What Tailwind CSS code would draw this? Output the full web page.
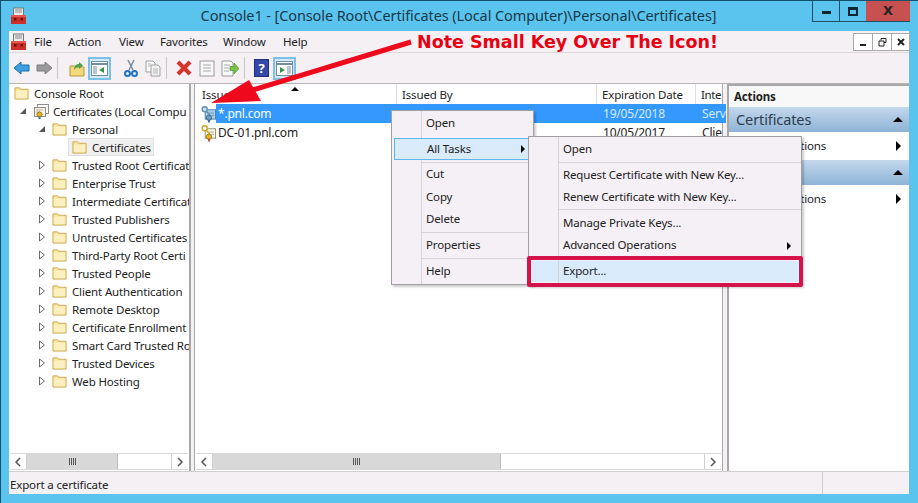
<!DOCTYPE html>
<html lang="en">
<head>
  <meta charset="UTF-8">
  <title>Console1</title>
  <script src="https://cdn.jsdelivr.net/npm/@tailwindcss/browser@4"></script>
</head>
<body class="bg-[#5bc4ee] overflow-hidden">
  <svg class="hidden">
    <symbol id="folder" viewBox="0 0 16 14">
      <path d="M1 1.500h5l1 1.500h8v10.500H1z" fill="#fbe6a2" stroke="#c9a64e"/>
      <path d="M2 4.500h12v8H2z" fill="#fdf0c0"/>
    </symbol>
    <symbol id="open" viewBox="0 0 8 10">
      <path d="M1.500 1l5 4-5 4z" fill="#fff" stroke="#6b6b6b"/>
    </symbol>
    <symbol id="expanded" viewBox="0 0 8 8">
      <path d="M7 1v6H1z" fill="#555"/>
    </symbol>
    <symbol id="chev-l" viewBox="0 0 8 10"><path d="M6 1L2 5l4 4" fill="none" stroke="#555" stroke-width="1.500"/></symbol>
    <symbol id="chev-r" viewBox="0 0 8 10"><path d="M2 1l4 4-4 4" fill="none" stroke="#555" stroke-width="1.500"/></symbol>
    <symbol id="snapin" viewBox="0 0 16 16">
      <rect x="4.500" y="1.500" width="11" height="9" fill="#fff" stroke="#8d8d8d"/>
      <rect x="1.500" y="4.500" width="11" height="9" fill="#f7f2dc" stroke="#8d8d8d"/>
      <path d="M3 7h7M3 9h4" stroke="#b5b5b5"/>
      <circle cx="6.500" cy="11.500" r="2.500" fill="#e9b526" stroke="#9a7414"/>
      <path d="M6.500 13.500v2.500" stroke="#3b6fb0" stroke-width="2"/>
    </symbol>
    <symbol id="cert-key" viewBox="0 0 16 18">
      <rect x="4.500" y="4.500" width="11" height="10" fill="#fffbe8" stroke="#8f8a70"/>
      <path d="M8 8h6M11 10.500h3" stroke="#a9a68f"/>
      <circle cx="4" cy="4" r="2.700" fill="#fff" stroke="#d1a21f" stroke-width="1.500"/>
      <path d="M5.500 6l4 4" stroke="#d1a21f" stroke-width="1.500"/>
      <circle cx="8.500" cy="13" r="2.800" fill="#e9b526" stroke="#9a7414"/>
      <path d="M8.500 15v3" stroke="#b5472c" stroke-width="2"/>
    </symbol>
    <symbol id="cert-key-sel" viewBox="0 0 16 18">
      <rect x="4.500" y="4.500" width="11" height="10" fill="#a9cfe8" stroke="#4d7fa3"/>
      <path d="M8 8h6M11 10.500h3" stroke="#6c9cbd"/>
      <circle cx="4" cy="4" r="2.700" fill="#cfe4f2" stroke="#5e93b5" stroke-width="1.500"/>
      <path d="M5.500 6l4 4" stroke="#5e93b5" stroke-width="1.500"/>
      <circle cx="8.500" cy="13" r="2.800" fill="#6d9fc4" stroke="#3b6a8f"/>
      <path d="M8.500 15v3" stroke="#3b6a8f" stroke-width="2"/>
    </symbol>
    <symbol id="toolbox" viewBox="0 0 17 18">
      <rect x="3.500" y="1" width="10" height="8" fill="#ededed" stroke="#777"/>
      <path d="M5 3h7M5 5h7" stroke="#8a8a8a"/>
      <path d="M1 8h15v9H1z" fill="#cc3029"/>
      <path d="M1 8h15v2H1z" fill="#e2574f"/>
      <rect x="4" y="11" width="2.500" height="2.500" fill="#6d0f0b"/>
      <rect x="10.500" y="11" width="2.500" height="2.500" fill="#6d0f0b"/>
    </symbol>
  </svg>

  <div class="relative w-[918px] h-[503px] flex flex-col border-t border-l border-[#12506c] font-['Noto_Sans',sans-serif] text-[11.500px] tracking-[-0.15px] text-[#222]">
    <!-- title bar -->
    <div class="relative h-[30px] shrink-0 flex items-center justify-center text-[14.500px] tracking-[-0.1px] text-[#17394a] pr-[2px]">
      <svg class="absolute left-[9px] top-[6px] w-[17px] h-[18px]"><use href="#toolbox"/></svg>
      <span>Console1 - [Console Root\Certificates (Local Computer)\Personal\Certificates]</span>
      <div class="absolute left-[811px] top-0 flex h-[21px] border-b border-l border-[#1b4f66]">
        <div class="w-[27px] flex items-center justify-center border-r border-[#1b4f66]"><div class="w-[9px] h-[3px] bg-[#10252e] mt-[3px]"></div></div>
        <div class="w-[26px] flex items-center justify-center"><div class="w-[10px] h-[9px] border-2 border-t-[3px] border-[#10252e]"></div></div>
        <div class="w-[44px] flex items-center justify-center bg-[#c75050] font-bold text-[13px] text-[#222] font-['DejaVu_Sans',sans-serif]">X</div>
      </div>
    </div>

    <!-- client area -->
    <div class="mx-[8px] w-[900px] h-[463px] bg-[#f4f0f4] flex flex-col">
      <!-- menu bar -->
      <div class="relative h-[22px] shrink-0 flex items-center border-b border-[#dcd8dc]">
        <svg class="absolute left-[1px] top-[2px] w-[17px] h-[18px]"><use href="#toolbox"/></svg>
        <div class="flex pl-[25px] pt-[1px] whitespace-nowrap">
          <span class="w-[34px]">File</span>
          <span class="w-[51px]">Action</span>
          <span class="w-[41px]">View</span>
          <span class="w-[63px]">Favorites</span>
          <span class="w-[60px]">Window</span>
          <span>Help</span>
        </div>
        <div class="absolute left-[844px] top-[2px] flex h-[18px] bg-white border border-[#a9a9a9] text-[#222]">
          <div class="w-[19px] flex items-end justify-center pb-[4px] border-r border-[#a9a9a9]"><div class="w-[6px] h-[2px] bg-[#222]"></div></div>
          <div class="w-[19px] flex items-center justify-center border-r border-[#a9a9a9]">
            <svg class="w-[9px] h-[9px]" viewBox="0 0 9 9"><path d="M3 2.500V.5h5v4H6M1 3h5v5H1z" fill="none" stroke="#222"/></svg>
          </div>
          <div class="w-[17px] flex items-center justify-center">
            <svg class="w-[8px] h-[8px]" viewBox="0 0 8 8"><path d="M1 1l6 6M7 1L1 7" stroke="#222" stroke-width="2"/></svg>
          </div>
        </div>
      </div>

      <!-- toolbar -->
      <div class="h-[30px] shrink-0 flex items-center pl-[4px]">
        <svg class="w-[17px] h-[16px] mr-[6px]" viewBox="0 0 17 16"><path d="M1 8l7-6v3h8v6H8v3z" fill="#3f9fe0" stroke="#1d6fae" stroke-linejoin="round"/></svg>
        <svg class="w-[17px] h-[16px] mr-[4px]" viewBox="0 0 17 16"><path d="M16 8L9 2v3H1v6h8v3z" fill="#9a9a9a" stroke="#7a7a7a" stroke-linejoin="round"/></svg>
        <div class="w-px h-[22px] bg-[#c8c8c8] mr-[11px]"></div>
        <svg class="w-[16px] h-[17px] mr-[3px]" viewBox="0 0 16 17"><path d="M1 6h5l1 1h8v9H1z" fill="#f2d97a" stroke="#b8983c"/><path d="M5 10c0-4 2-6 5-6V2l4 3.500-4 3.500V7c-2 0-4 1-5 3z" fill="#4ea34a"/></svg>
        <div class="w-[23px] h-[23px] mr-[13px] bg-[#d3e9f8] border-2 border-[#7cc0e6] flex items-center justify-center">
          <svg class="w-[17px] h-[15px] shrink-0" viewBox="0 0 17 15"><rect x=".5" y=".5" width="16" height="14" fill="#fff" stroke="#6f8da3"/><path d="M1 3h15" stroke="#6f8da3" stroke-width="2"/><path d="M2 5h4v8H2z" fill="#b9c6cf"/><path d="M13 6v6L8 9z" fill="#3d8f4a"/></svg>
        </div>
        <svg class="w-[14px] h-[19px] mr-[7px]" viewBox="0 0 14 19"><path d="M4 1l5 10M10 1L5 11" stroke="#7c8c99" stroke-width="1.500"/><circle cx="3.500" cy="14.500" r="2.500" fill="none" stroke="#1f74c4" stroke-width="2"/><circle cx="10.500" cy="14.500" r="2.500" fill="none" stroke="#1f74c4" stroke-width="2"/></svg>
        <svg class="w-[16px] h-[17px] mr-[5px]" viewBox="0 0 16 17"><path d="M1 1h7l2 2v9H1z" fill="#fbfbfb" stroke="#a0a0a0"/><path d="M6 5h7l2 2v9H6z" fill="#f1f1f1" stroke="#a0a0a0"/><path d="M8 9h5M8 11h5M8 13h5M3 4h3M3 6h2" stroke="#b8b8b8"/></svg>
        <div class="w-px h-[22px] bg-[#c8c8c8] mr-[9px]"></div>
        <svg class="w-[16px] h-[16px] mr-[7px]" viewBox="0 0 16 16"><path d="M2 2l12 12M14 2L2 14" stroke="#d9322c" stroke-width="4"/></svg>
        <svg class="w-[16px] h-[17px] mr-[6px]" viewBox="0 0 16 17"><rect x="1" y="1" width="14" height="15" fill="#f8f8f8" stroke="#9a9a9a"/><path d="M4 5h8M4 8h8M4 11h8" stroke="#a9a9a9"/></svg>
        <svg class="w-[18px] h-[17px] mr-[5px]" viewBox="0 0 18 17"><path d="M1 1h9l2 2v13H1z" fill="#f8f8f8" stroke="#9a9a9a"/><path d="M3 5h6M3 8h5M3 11h5" stroke="#a9a9a9"/><path d="M9 6.500h4V3l5 5.500-5 5.500v-3.500H9z" fill="#7cc04a" stroke="#4f9a2f" stroke-width=".7"/></svg>
        <div class="w-px h-[22px] bg-[#c8c8c8] mr-[9px]"></div>
        <div class="w-[15px] h-[18px] mr-[4px] bg-[#3348a8] border border-[#22307a] text-white font-bold text-[13px] leading-[16px] text-center">?</div>
        <div class="w-[23px] h-[23px] bg-[#d3e9f8] border-2 border-[#7cc0e6] flex items-center justify-center">
          <svg class="w-[17px] h-[15px] shrink-0" viewBox="0 0 17 15"><rect x=".5" y=".5" width="16" height="14" fill="#fff" stroke="#6f8da3"/><path d="M1 3h15" stroke="#6f8da3" stroke-width="2"/><path d="M11 5h4v8h-4z" fill="#b9c6cf"/><path d="M4 6v6l5-3z" fill="#3d8f4a"/></svg>
        </div>
      </div>

      <!-- panes -->
      <div class="h-[388px] shrink-0 flex border-t border-[#b5b5b5]">
        <!-- tree -->
        <div class="w-[182px] shrink-0 bg-white border-r-2 border-[#a8a8a8] flex flex-col">
          <div id="tree" class="flex-1 overflow-hidden whitespace-nowrap">
            <div class="h-[18px] flex items-center pl-[5px]"><svg class="w-[15px] h-[14px] mr-[5px] shrink-0"><use href="#folder"/></svg><span class="pt-[1px]">Console Root</span></div>
            <div class="h-[18px] flex items-center pl-[10px]"><svg class="w-[8px] h-[8px] mr-[6px] shrink-0"><use href="#expanded"/></svg><svg class="w-[16px] h-[16px] mr-[4px] shrink-0"><use href="#snapin"/></svg><span class="pt-[1px]">Certificates (Local Compu</span></div>
            <div class="h-[18px] flex items-center pl-[29px]"><svg class="w-[8px] h-[8px] mr-[6px] shrink-0"><use href="#expanded"/></svg><svg class="w-[15px] h-[14px] mr-[5px] shrink-0"><use href="#folder"/></svg><span class="pt-[1px]">Personal</span></div>
            <div class="h-[18px] flex items-center ml-[59px] pl-[3px] w-[86px] bg-[#f0f0f0] border border-[#e2e2e2]"><svg class="w-[15px] h-[14px] mr-[5px] shrink-0"><use href="#folder"/></svg><span class="pt-[1px]">Certificates</span></div>
          </div>
          <div class="h-[17px] mb-[1px] mx-[1px] flex bg-white border-y border-[#d8d8d8]">
            <div class="w-[17px] flex items-center justify-center border-r border-[#cfcfcf]"><svg class="w-[8px] h-[10px]"><use href="#chev-l"/></svg></div>
            <div class="w-[91px] bg-[#d8d8d8] flex items-center justify-center gap-px border-r border-[#bdbdbd]"><i class="w-px h-[7px] bg-[#555]"></i><i class="w-px h-[7px] bg-[#555]"></i><i class="w-px h-[7px] bg-[#555]"></i><i class="w-px h-[7px] bg-[#555]"></i></div>
            <div class="flex-1"></div>
            <div class="w-[17px] flex items-center justify-center border-l border-[#cfcfcf]"><svg class="w-[8px] h-[10px]"><use href="#chev-r"/></svg></div>
          </div>
        </div>

        <div class="w-[3px] shrink-0"></div>

        <!-- list -->
        <div class="w-[529px] shrink-0 bg-white border-l border-r border-[#a8a8a8] flex flex-col">
          <div class="h-[20px] flex items-center whitespace-nowrap">
            <div class="relative w-[202px] h-full flex items-center pl-[7px] pt-[2px] border-r border-[#dedede]">Issued To
              <div class="absolute left-[96px] top-[3px] w-0 h-0 border-x-[4px] border-x-transparent border-b-[4px] border-b-black"></div>
            </div>
            <div class="w-[200px] h-full flex items-center pl-[5px] pt-[2px] border-r border-[#dedede]">Issued By</div>
            <div class="w-[99px] h-full flex items-center pl-[5px] pt-[2px] border-r border-[#dedede]">Expiration Date</div>
            <div class="w-[26px] h-full flex items-center pl-[5px] pt-[2px] tracking-[-0.4px]">Inte</div>
          </div>
          <div class="h-[19px] flex items-center whitespace-nowrap text-[12px] tracking-[-0.2px]">
            <svg class="w-[15px] h-[18px] ml-[6px] shrink-0"><use href="#cert-key-sel"/></svg>
            <div class="flex-1 h-full flex items-center bg-[#3399ff] text-white pl-[2px] pt-[1px]">
              <span class="w-[385px] shrink-0">*.pnl.com</span>
              <span class="w-[99px] shrink-0 text-[#d6e9ff]">19/05/2018</span>
              <span class="text-[#d6e9ff] overflow-hidden">Serv</span>
            </div>
          </div>
          <div class="h-[19px] flex items-center whitespace-nowrap text-[12px] tracking-[-0.2px]">
            <svg class="w-[15px] h-[18px] ml-[6px] shrink-0"><use href="#cert-key"/></svg>
            <span class="pl-[2px] pt-[1px] w-[387px] shrink-0">DC-01.pnl.com</span>
            <span class="w-[99px] pt-[1px] shrink-0">10/05/2017</span>
            <span class="pt-[1px]">Clie</span>
          </div>
          <div class="flex-1"></div>
          <div class="h-[17px] mb-[1px] mx-[1px] flex bg-white border-y border-[#d8d8d8]">
            <div class="w-[17px] flex items-center justify-center border-r border-[#cfcfcf]"><svg class="w-[8px] h-[10px]"><use href="#chev-l"/></svg></div>
            <div class="w-[288px] bg-[#d8d8d8] flex items-center justify-center gap-px border-r border-[#bdbdbd]"><i class="w-px h-[7px] bg-[#555]"></i><i class="w-px h-[7px] bg-[#555]"></i><i class="w-px h-[7px] bg-[#555]"></i><i class="w-px h-[7px] bg-[#555]"></i></div>
            <div class="flex-1"></div>
            <div class="w-[17px] flex items-center justify-center border-l border-[#cfcfcf]"><svg class="w-[8px] h-[10px]"><use href="#chev-r"/></svg></div>
          </div>
        </div>

        <div class="w-[4px] shrink-0"></div>

        <!-- actions -->
        <div class="flex-1 bg-white border-l-2 border-t-2 border-[#a8a8a8] flex flex-col whitespace-nowrap">
          <div class="h-[21px] flex items-center pl-[5px] font-bold bg-[#f8f8f8]">Actions</div>
          <div class="h-[25px] flex items-center justify-between pl-[7px] pr-[6px] text-[14.500px] tracking-[-0.1px] text-[#2c3e50] bg-gradient-to-b from-[#c3d8ec] to-[#8fb3d6]">Certificates
            <div class="w-0 h-0 border-x-[5px] border-x-transparent border-b-[5px] border-b-black"></div>
          </div>
          <div class="h-[28px] flex items-center justify-between pl-[28px] pr-[8px]">More Actions
            <div class="w-0 h-0 border-y-[5px] border-y-transparent border-l-[5px] border-l-black"></div>
          </div>
          <div class="h-[25px] flex items-center justify-end pr-[6px] bg-gradient-to-b from-[#c3d8ec] to-[#8fb3d6]">
            <div class="w-0 h-0 border-x-[5px] border-x-transparent border-b-[5px] border-b-black"></div>
          </div>
          <div class="h-[28px] flex items-center justify-between pl-[28px] pr-[8px]">More Actions
            <div class="w-0 h-0 border-y-[5px] border-y-transparent border-l-[5px] border-l-black"></div>
          </div>
        </div>
      </div>

      <!-- status bar -->
      <div class="h-[23px] flex items-center border-t border-[#cfcfcf]">
        <div class="w-[813px] pl-[1px] pt-[4px]">Export a certificate</div>
        <div class="h-full flex-1 border-l border-[#cfcfcf]"></div>
      </div>
    </div>

    <!-- first context menu -->
    <div class="absolute left-[390px] top-[109px] w-[143px] h-[175px] bg-[#f5f0f5] border border-[#a0a0a0] shadow-[2px_2px_2px_rgba(0,0,0,0.2)]">
      <div class="absolute left-[29px] top-0 bottom-0 w-px bg-[#d5d5d5]"></div>
      <div class="h-[24px] flex items-center pl-[34px]">Open</div>
      <div class="relative ml-[2px] mt-[3px] h-[22px] w-[140px] flex items-center pl-[32px] bg-[#d9eafa] border border-[#5fb6e8]">All Tasks
        <div class="absolute right-[8px] top-[6px] w-0 h-0 border-y-[4px] border-y-transparent border-l-[4px] border-l-black"></div>
      </div>
      <div class="h-px mt-[2px] ml-[30px] bg-[#d5d5d5]"></div>
      <div class="h-[22px] flex items-center pl-[34px]">Cut</div>
      <div class="h-[23px] flex items-center pl-[34px]">Copy</div>
      <div class="h-[22px] flex items-center pl-[34px]">Delete</div>
      <div class="h-px mt-[2px] ml-[30px] bg-[#d5d5d5]"></div>
      <div class="h-[24px] flex items-center pl-[34px]">Properties</div>
      <div class="h-px mt-[1px] ml-[30px] bg-[#d5d5d5]"></div>
      <div class="h-[24px] flex items-center pl-[34px]">Help</div>
    </div>

    <!-- all tasks submenu -->
    <div class="absolute left-[527px] top-[135px] w-[274px] h-[150px] bg-[#f5f0f5] border border-[#a0a0a0] shadow-[2px_2px_2px_rgba(0,0,0,0.2)]">
      <div class="absolute left-[29px] top-0 bottom-0 w-px bg-[#d5d5d5]"></div>
      <div class="h-[24px] flex items-center pl-[34px]">Open</div>
      <div class="h-px mt-[1px] ml-[30px] bg-[#d5d5d5]"></div>
      <div class="h-[23px] flex items-center pl-[34px]">Request Certificate with New Key...</div>
      <div class="h-[22px] flex items-center pl-[34px]">Renew Certificate with New Key...</div>
      <div class="h-px mt-[1px] ml-[30px] bg-[#d5d5d5]"></div>
      <div class="h-[25px] flex items-center pl-[34px]">Manage Private Keys...</div>
      <div class="relative h-[20px] flex items-center pl-[34px]">Advanced Operations
        <div class="absolute right-[10px] top-[7px] w-0 h-0 border-y-[4px] border-y-transparent border-l-[4px] border-l-black"></div>
      </div>
      <div class="mt-[6px] mx-[3px] h-[21px] flex items-center pl-[31px] pb-[1px] bg-[#d9eafa]">Export...</div>
    </div>

    <!-- red box round Export -->
    <div class="absolute left-[526px] top-[255px] w-[276px] h-[31px] border-[4px] border-[#d4134b] rounded-[2px]"></div>

    <!-- annotation -->
    <span class="absolute left-[416px] top-[30px] font-['DejaVu_Sans',sans-serif] font-bold text-[17.500px] tracking-normal leading-[22px] text-[#e60012] whitespace-nowrap">Note Small Key Over The Icon!</span>
    <svg class="absolute left-0 top-0 w-[918px] h-[503px] pointer-events-none" viewBox="0 0 918 503">
      <path d="M410 41L245 91" stroke="#ee0a1c" stroke-width="5"/>
      <path d="M210 102L248 79L260 100z" fill="#ee0a1c"/>
    </svg>
  </div>

  <script>
    const names = ['Trusted Root Certificat', 'Enterprise Trust', 'Intermediate Certificat', 'Trusted Publishers', 'Untrusted Certificates', 'Third-Party Root Certi', 'Trusted People', 'Client Authentication', 'Remote Desktop', 'Certificate Enrollment', 'Smart Card Trusted Ro', 'Trusted Devices', 'Web Hosting'];
    const tree = document.getElementById('tree');
    names.forEach(name => {
      const row = document.createElement('div');
      row.className = 'h-[18px] flex items-center pl-[29px]';
      row.innerHTML = `<svg class="w-[8px] h-[10px] mr-[6px] shrink-0"><use href="#open"/></svg><svg class="w-[15px] h-[14px] mr-[5px] shrink-0"><use href="#folder"/></svg><span class="pt-[1px]">${name}</span>`;
      tree.appendChild(row);
    });
  </script>
</body>
</html>
